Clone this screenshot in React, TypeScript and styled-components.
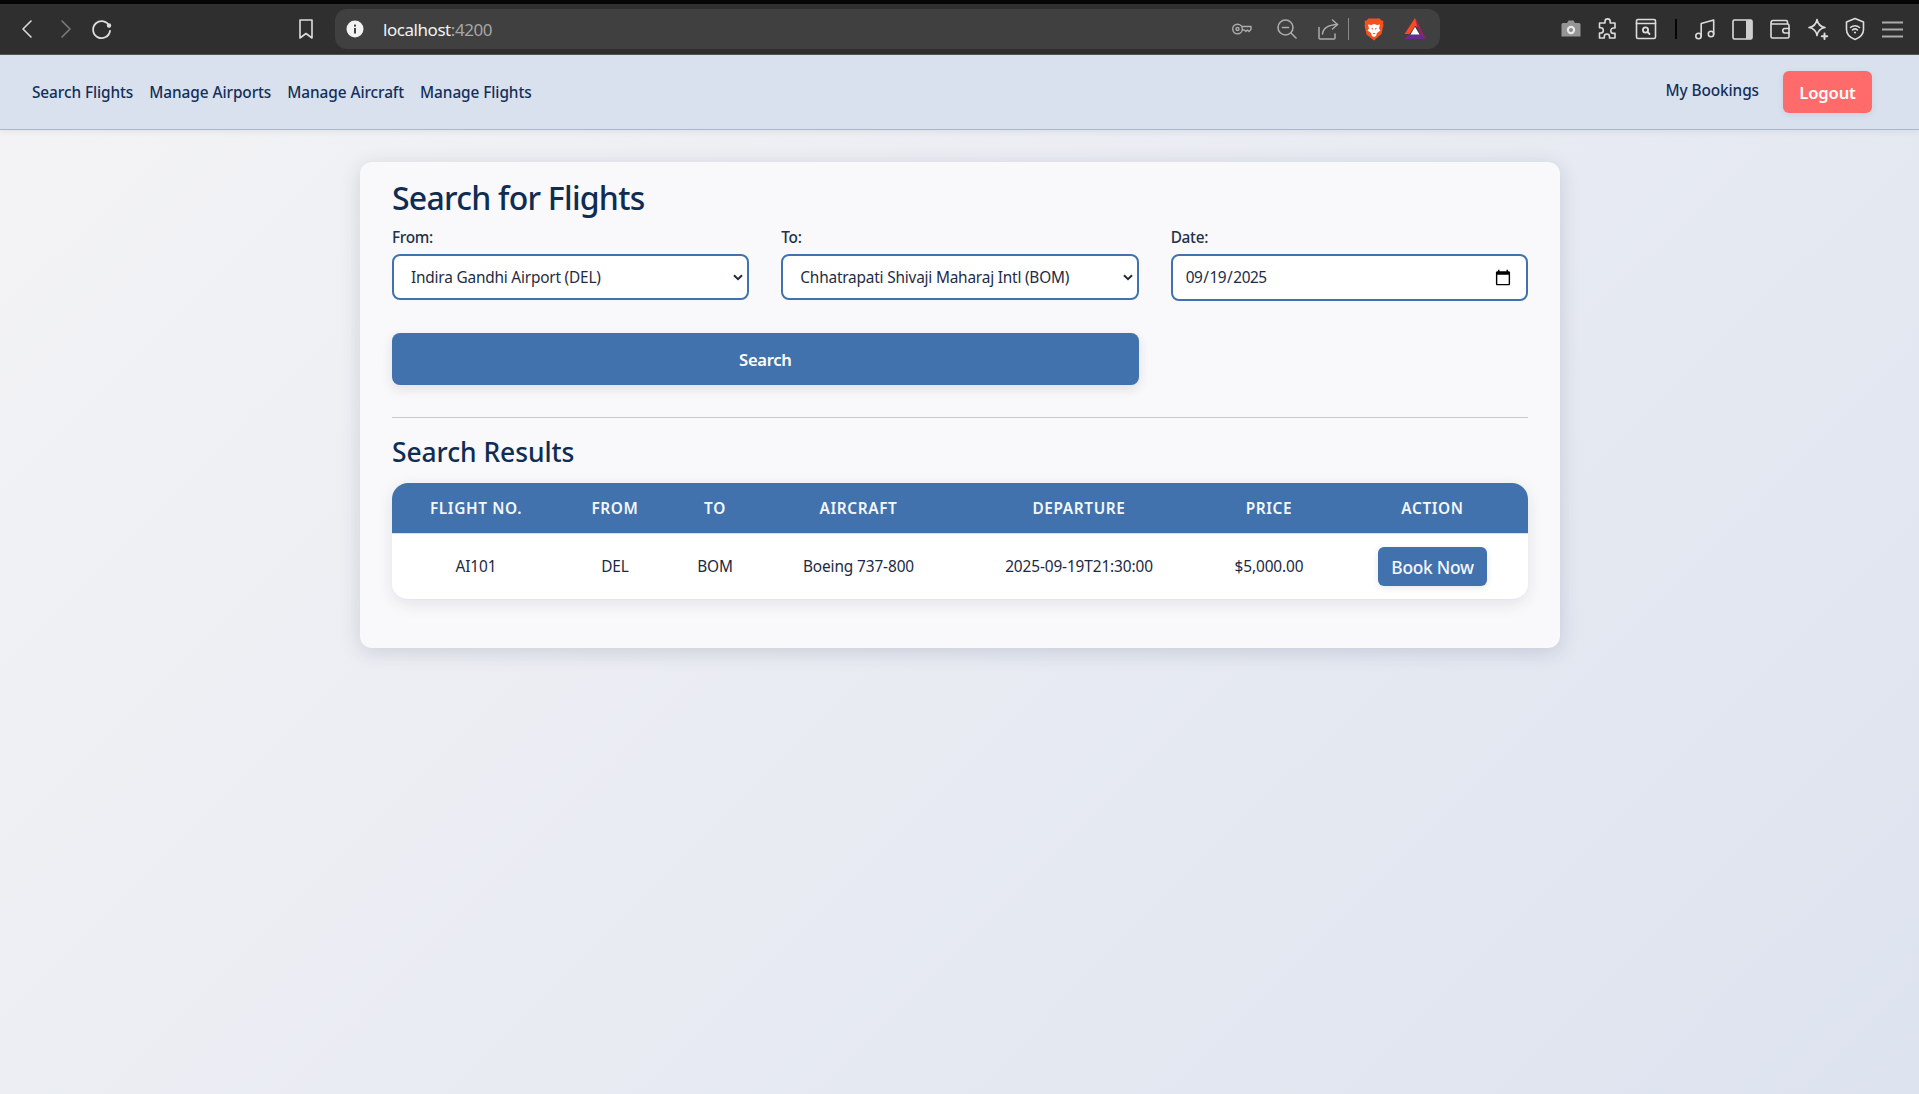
import React from 'react'
import styled, { createGlobalStyle } from 'styled-components'

const GlobalStyle = createGlobalStyle`
  html, body { margin: 0; padding: 0; height: 100%; }
  body {
    font-family: 'Noto Sans', 'Open Sans', sans-serif;
    color: #0f2a4a;
    overflow: hidden;
  }
  #root { height: 100%; }
`

const Page = styled.div`
  height: 1094px;
  display: flex;
  flex-direction: column;
  background: linear-gradient(135deg, #f4f4f5 0%, #dde3ef 100%);
`

/* browser chrome */
const Chrome = styled.div`
  height: 50px;
  flex: none;
  border-top: 4px solid #050505;
  border-bottom: 1px solid #555;
  background: #2f2f2f;
  display: flex;
  align-items: center;
  box-sizing: content-box;
`
const IconSlot = styled.span<{ $w?: number; $tone?: 'dim' | 'mid' }>`
  width: ${p => p.$w ?? 37.5}px;
  flex: none;
  display: flex;
  justify-content: center;
  align-items: center;
  color: ${p => (p.$tone === 'dim' ? '#7c7c7c' : p.$tone === 'mid' ? '#ababab' : '#dcdcdc')};
  svg { display: block; }
`
const NavCluster = styled.div`
  width: 335px;
  flex: none;
  display: flex;
  align-items: center;
  padding-left: 9px;
  box-sizing: border-box;
`
const NavIcon = styled(IconSlot)`
  width: 37px;
`
const BookmarkWrap = styled.div`
  margin-left: 174px;
  display: flex;
`
const UrlBar = styled.div`
  width: 1105px;
  height: 40px;
  flex: none;
  border-radius: 12px;
  background: #404040;
  display: flex;
  align-items: center;
  padding: 0 5px 0 8px;
  box-sizing: border-box;
`
const UrlText = styled.div`
  margin-left: 16px;
  font-size: 17px;
  letter-spacing: -0.45px;
  color: #f2f2f2;
  flex: 1;
  span { color: #a6a6a6; }
`
const UrlSep = styled.i`
  width: 1px;
  height: 22px;
  background: #8a8a8a;
  margin: 0 4px 0 0;
`
const ToolCluster = styled.div`
  margin-left: 112px;
  display: flex;
  align-items: center;
`
const ToolSep = styled.i`
  width: 2px;
  height: 20px;
  background: #050505;
  margin: 0 10px;
`

/* app header */
const Header = styled.header`
  height: 74px;
  flex: none;
  background: #dae1ee;
  border-bottom: 1px solid #aab6c9;
  box-shadow: 0 2px 6px rgba(60, 70, 90, 0.08);
  display: flex;
  align-items: center;
  justify-content: space-between;
  padding: 0 47px 0 32px;
  box-sizing: content-box;
`
const NavLinks = styled.nav`
  display: flex;
  gap: 16px;
`
const NavLink = styled.a`
  font-size: 15.4px;
  font-weight: 500;
  letter-spacing: -0.09px;
  color: #123059;
`
const HeaderRight = styled.div`
  display: flex;
  align-items: center;
  gap: 24px;
`
const BookingsLink = styled(NavLink)`
  position: relative;
  top: -2px;
`
const LogoutButton = styled.button`
  width: 89px;
  height: 42px;
  border: 0;
  border-radius: 6px;
  background: #ff6b6b;
  color: #fff;
  font: 600 16.6px 'Noto Sans', sans-serif;
  letter-spacing: -0.15px;
  box-shadow: 0 2px 6px rgba(60, 70, 90, 0.1);
`

/* content */
const Main = styled.main`
  flex: 1;
  padding-top: 32px;
  display: flex;
  justify-content: center;
`
const Card = styled.section`
  width: 1200px;
  height: 486px;
  margin-left: 1px;
  box-sizing: border-box;
  padding: 18px 32px 0;
  background: #f9f8fa;
  border-radius: 12px;
  box-shadow: 0 4px 20px rgba(40, 50, 80, 0.16);
`
const Title = styled.h2`
  margin: 0;
  font-size: 32px;
  line-height: 36px;
  font-weight: 500;
  letter-spacing: -0.75px;
  color: #0f2d52;
`
const FormGrid = styled.form`
  margin-top: 11px;
  display: grid;
  grid-template-columns: repeat(3, 1fr);
  column-gap: 32px;
  row-gap: 32px;
`
const Field = styled.label`
  display: flex;
  flex-direction: column;
`
const FieldLabel = styled.span`
  font-size: 15.4px;
  line-height: 22px;
  font-weight: 500;
  letter-spacing: -0.3px;
  color: #22304a;
  margin-bottom: 5px;
`
const Select = styled.select`
  appearance: none;
  height: 46px;
  width: 100%;
  padding: 0 18px 0 17px;
  border: 2px solid #4172ad;
  border-radius: 8px;
  background: #fff url("data:image/svg+xml,%3Csvg xmlns='http://www.w3.org/2000/svg' width='10' height='7' viewBox='0 0 10 7'%3E%3Cpath d='M1 1.2l4 4 4-4' fill='none' stroke='%23222b3a' stroke-width='2'/%3E%3C/svg%3E") no-repeat right 4px center;
  color: #1e2c44;
  font: 400 15.4px 'Noto Sans', sans-serif;
  letter-spacing: -0.2px;
  outline: none;
`
const DateInput = styled.input`
  height: 47px;
  width: 100%;
  box-sizing: border-box;
  padding: 0 14px 0 12px;
  border: 2px solid #4172ad;
  border-radius: 8px;
  background: #fff;
  color: #1e2c44;
  font: 400 15.4px 'Noto Sans', sans-serif;
  letter-spacing: -0.5px;
  outline: none;
  &::-webkit-calendar-picker-indicator {
    width: 18px;
    height: 18px;
    padding: 0;
    margin: 0;
  }
`
const SearchButton = styled.button`
  grid-column: span 2;
  height: 52px;
  border: 0;
  border-radius: 8px;
  background: #4172ad;
  color: #fff;
  font: 600 16.6px 'Noto Sans', sans-serif;
  letter-spacing: -0.3px;
  box-shadow: 0 4px 12px rgba(40, 60, 100, 0.12);
`
const Divider = styled.hr`
  margin: 32px 0 0;
  border: 0;
  border-top: 1px solid #c6c9d0;
`
const SubTitle = styled.h3`
  margin: 16px 0 0;
  font-size: 26.4px;
  line-height: 36px;
  font-weight: 500;
  letter-spacing: -0.05px;
  color: #0f2d52;
`
const TableWrap = styled.div`
  margin-top: 13px;
  border-radius: 16px;
  overflow: hidden;
  box-shadow: 0 4px 16px rgba(40, 60, 100, 0.1);
  border-bottom: 1px solid #e0e5ee;
`
const Table = styled.table`
  width: 100%;
  table-layout: fixed;
  border-collapse: collapse;
  background: #fff;
`
const Th = styled.th`
  height: 50px;
  padding: 0;
  background: #4172ad;
  color: #f4f7fb;
  font-size: 15.4px;
  font-weight: 600;
  letter-spacing: 0.62px;
  text-transform: uppercase;
  border-bottom: 1px solid #dae1ee;
`
const Td = styled.td`
  height: 65px;
  padding: 0;
  text-align: center;
  font-size: 15.4px;
  letter-spacing: -0.12px;
  color: #1a2a44;
`
const BookButton = styled.button`
  width: 109px;
  height: 39px;
  border: 0;
  border-radius: 6px;
  background: #4172ad;
  color: #f4f7fb;
  font: 500 17.4px 'Noto Sans', sans-serif;
  letter-spacing: -0.3px;
  box-shadow: 0 2px 6px rgba(40, 60, 100, 0.12);
`

const stroke = {
  fill: 'none',
  stroke: 'currentColor',
  strokeWidth: 1.6,
  strokeLinecap: 'round' as const,
  strokeLinejoin: 'round' as const,
}

const Svg = ({ s = 24, children }: { s?: number; children: React.ReactNode }) => (
  <svg width={s} height={s} viewBox="0 0 24 24" {...stroke}>{children}</svg>
)

const columns = [
  { label: 'Flight No.', width: 168 },
  { label: 'From', width: 110 },
  { label: 'To', width: 90 },
  { label: 'Aircraft', width: 197 },
  { label: 'Departure', width: 244 },
  { label: 'Price', width: 136 },
  { label: 'Action', width: 191 },
]

export default function App() {
  return (
    <Page>
      <GlobalStyle />
      <Chrome>
        <NavCluster>
          <NavIcon><Svg><path d="M15 4l-8 8 8 8" /></Svg></NavIcon>
          <NavIcon $tone="dim"><Svg><path d="M9 4l8 8-8 8" /></Svg></NavIcon>
          <NavIcon>
            <Svg>
              <path d="M19.5 9.5A8.5 8.5 0 1 0 20 14" strokeWidth={1.8} />
              <circle cx="19" cy="8.5" r="2.2" fill="currentColor" stroke="none" />
            </Svg>
          </NavIcon>
          <BookmarkWrap>
            <IconSlot $w={24}><Svg><path d="M6 3h12v18l-6-4.5L6 21z" /></Svg></IconSlot>
          </BookmarkWrap>
        </NavCluster>
        <UrlBar>
          <IconSlot $w={24}>
            <svg width="18" height="18" viewBox="0 0 18 18">
              <circle cx="9" cy="9" r="8.5" fill="#f2f2f2" />
              <rect x="8" y="8" width="2" height="5.5" fill="#404040" />
              <rect x="8" y="4.6" width="2" height="2" fill="#404040" />
            </svg>
          </IconSlot>
          <UrlText>localhost<span>:4200</span></UrlText>
          <IconSlot $w={46} $tone="mid">
            <svg width="20" height="12" viewBox="0 0 20 12" fill="none" stroke="currentColor" strokeWidth="1.4" strokeLinejoin="round">
              <circle cx="5.5" cy="6" r="4.8" />
              <circle cx="5.5" cy="6" r="1.5" />
              <path d="M10 3.5h9v3l-2 2-1.5-1.5-1.5 1.5-1.5-1.5h-2.5" />
            </svg>
          </IconSlot>
          <IconSlot $w={43} $tone="mid">
            <svg width="20" height="20" viewBox="0 0 20 20" fill="none" stroke="currentColor" strokeWidth="1.6" strokeLinecap="round">
              <circle cx="8.5" cy="8.5" r="7.5" />
              <path d="M5.5 8.5h6M14 14l5 5" />
            </svg>
          </IconSlot>
          <IconSlot $w={40} $tone="mid">
            <svg width="21" height="21" viewBox="0 0 21 21" fill="none" stroke="currentColor" strokeWidth="1.5" strokeLinecap="round" strokeLinejoin="round">
              <path d="M1 8.5V19a1 1 0 0 0 1 1h14a1 1 0 0 0 1-1v-4" />
              <path d="M4.5 15c.5-5.5 5-9 15-9.500" />
              <path d="M14.5 1l5 4.500-5 4.500" />
            </svg>
          </IconSlot>
          <UrlSep />
          <IconSlot $w={42}>
            <svg width="20" height="23" viewBox="0 0 20 23">
              <path d="M4.5 .5h11l2 2 2 .5-.5 2.500.5 1.500-2 9-7.500 6.500L2.500 16.500l-2-9 .5-1.500L.5 3l2-.5z" fill="#f4511e" />
              <path d="M4 6.500l3 .5 3-1 3 1 3-.5-1 4 1.500 2-3.500 2.500-1 3-2 1-2-1-1-3L3.500 12.500 5 10.500z" fill="#fff" />
              <path d="M7 9.500l2 1-.5 1.500zM13 9.500l-2 1 .5 1.500z" fill="#f4511e" />
              <path d="M8.500 15h3L10 16.500z" fill="#f4511e" />
            </svg>
          </IconSlot>
          <IconSlot $w={40}>
            <svg width="24" height="24" viewBox="0 0 24 24">
              <path d="M12 1l5.500 10.500L12 9 6.500 17H1.500z" fill="#ff4724" />
              <path d="M12 1l11 21-5-4-4-9z" fill="#9e1f63" />
              <path d="M1 22l5-4.500h12L23 22z" fill="#662d91" />
              <path d="M12 10l4.500 7.500h-9z" fill="#fff" />
            </svg>
          </IconSlot>
        </UrlBar>
        <ToolCluster>
          <IconSlot $tone="mid">
            <svg width="20" height="18" viewBox="0 0 20 18">
              <path d="M2 3h4l1.500-2.500h5L14 3h4a1.500 1.500 0 0 1 1.500 1.500v12H.5v-12A1.500 1.500 0 0 1 2 3z" fill="#959595" />
              <circle cx="10" cy="10" r="4.200" fill="#e8e8e8" />
              <circle cx="10" cy="10" r="2" fill="#8a8a8a" />
            </svg>
          </IconSlot>
          <IconSlot>
            <Svg>
              <path d="M9 4.500a2.600 2.600 0 0 1 5.200 0V6H19v5h-1.500a2.700 2.700 0 0 0 0 5.400H19V21h-5.500v-1.400a2.600 2.600 0 0 0-5.200 0V21H3.500v-5h1.200a2.600 2.600 0 0 0 0-5.200H3.500V6H9z" />
            </Svg>
          </IconSlot>
          <IconSlot>
            <Svg>
              <rect x="2.500" y="2.500" width="19" height="19" rx="1.500" />
              <path d="M2.500 6.500h19" />
              <circle cx="11.500" cy="13" r="2.600" strokeWidth={1.8} />
              <path d="M13.500 15l2 2" strokeWidth={1.8} />
            </Svg>
          </IconSlot>
          <ToolSep />
          <IconSlot>
            <Svg>
              <circle cx="5.500" cy="19" r="2.700" />
              <circle cx="18" cy="17" r="2.700" />
              <path d="M8.200 19V6.500L20.700 3v14" />
            </Svg>
          </IconSlot>
          <IconSlot>
            <svg width="21" height="21" viewBox="0 0 21 21">
              <rect x="1" y="1" width="19" height="19" rx="1.500" fill="none" stroke="currentColor" strokeWidth="1.600" />
              <path d="M14 1h5a1 1 0 0 1 1 1v17a1 1 0 0 1-1 1h-5z" fill="#cfcfcf" />
            </svg>
          </IconSlot>
          <IconSlot>
            <Svg>
              <path d="M3 6.500v13A1.500 1.500 0 0 0 4.500 21h15a1.500 1.500 0 0 0 1.500-1.500v-11A1.500 1.500 0 0 0 19.500 7h-15A1.500 1.500 0 0 1 3 5.500 2 2 0 0 1 5 3.500h13A1.500 1.500 0 0 1 19.500 5v2" />
              <path d="M21 11.500h-4a2.200 2.200 0 0 0 0 4.500h4" />
            </Svg>
          </IconSlot>
          <IconSlot>
            <Svg>
              <path d="M11 2.500c.8 4.600 3.400 7.200 8 8-4.600.8-7.200 3.400-8 8-.8-4.600-3.400-7.200-8-8 4.600-.8 7.200-3.400 8-8z" />
              <path d="M18.500 16.500v5.500M15.800 19.200h5.400" strokeWidth={2} />
            </Svg>
          </IconSlot>
          <IconSlot>
            <Svg>
              <path d="M12 1.500l8.500 3.500v7.500c0 5-4 8.300-8.500 10-4.500-1.700-8.500-5-8.500-10V5z" />
              <path d="M7.500 10.500a6.500 6.500 0 0 1 9 0M9.500 13a3.600 3.600 0 0 1 5 0" />
              <circle cx="12" cy="15.500" r="1.100" fill="currentColor" stroke="none" />
            </Svg>
          </IconSlot>
          <IconSlot $tone="mid">
            <svg width="21" height="17" viewBox="0 0 21 17" fill="none" stroke="currentColor" strokeWidth="2">
              <path d="M0 1.500h21M0 8.500h21M0 15.500h21" />
            </svg>
          </IconSlot>
        </ToolCluster>
      </Chrome>

      <Header>
        <NavLinks>
          <NavLink>Search Flights</NavLink>
          <NavLink>Manage Airports</NavLink>
          <NavLink>Manage Aircraft</NavLink>
          <NavLink>Manage Flights</NavLink>
        </NavLinks>
        <HeaderRight>
          <BookingsLink>My Bookings</BookingsLink>
          <LogoutButton type="button">Logout</LogoutButton>
        </HeaderRight>
      </Header>

      <Main>
        <Card>
          <Title>Search for Flights</Title>
          <FormGrid>
            <Field>
              <FieldLabel>From:</FieldLabel>
              <Select defaultValue="DEL">
                <option value="DEL">Indira Gandhi Airport (DEL)</option>
              </Select>
            </Field>
            <Field>
              <FieldLabel>To:</FieldLabel>
              <Select defaultValue="BOM">
                <option value="BOM">Chhatrapati Shivaji Maharaj Intl (BOM)</option>
              </Select>
            </Field>
            <Field>
              <FieldLabel>Date:</FieldLabel>
              <DateInput type="date" defaultValue="2025-09-19" />
            </Field>
            <SearchButton type="button">Search</SearchButton>
          </FormGrid>
          <Divider />
          <SubTitle>Search Results</SubTitle>
          <TableWrap>
            <Table>
              <colgroup>
                {columns.map(c => <col key={c.label} width={c.width} />)}
              </colgroup>
              <thead>
                <tr>{columns.map(c => <Th key={c.label}>{c.label}</Th>)}</tr>
              </thead>
              <tbody>
                <tr>
                  <Td>AI101</Td>
                  <Td>DEL</Td>
                  <Td>BOM</Td>
                  <Td>Boeing 737-800</Td>
                  <Td>2025-09-19T21:30:00</Td>
                  <Td>$5,000.00</Td>
                  <Td><BookButton type="button">Book Now</BookButton></Td>
                </tr>
              </tbody>
            </Table>
          </TableWrap>
        </Card>
      </Main>
    </Page>
  )
}
